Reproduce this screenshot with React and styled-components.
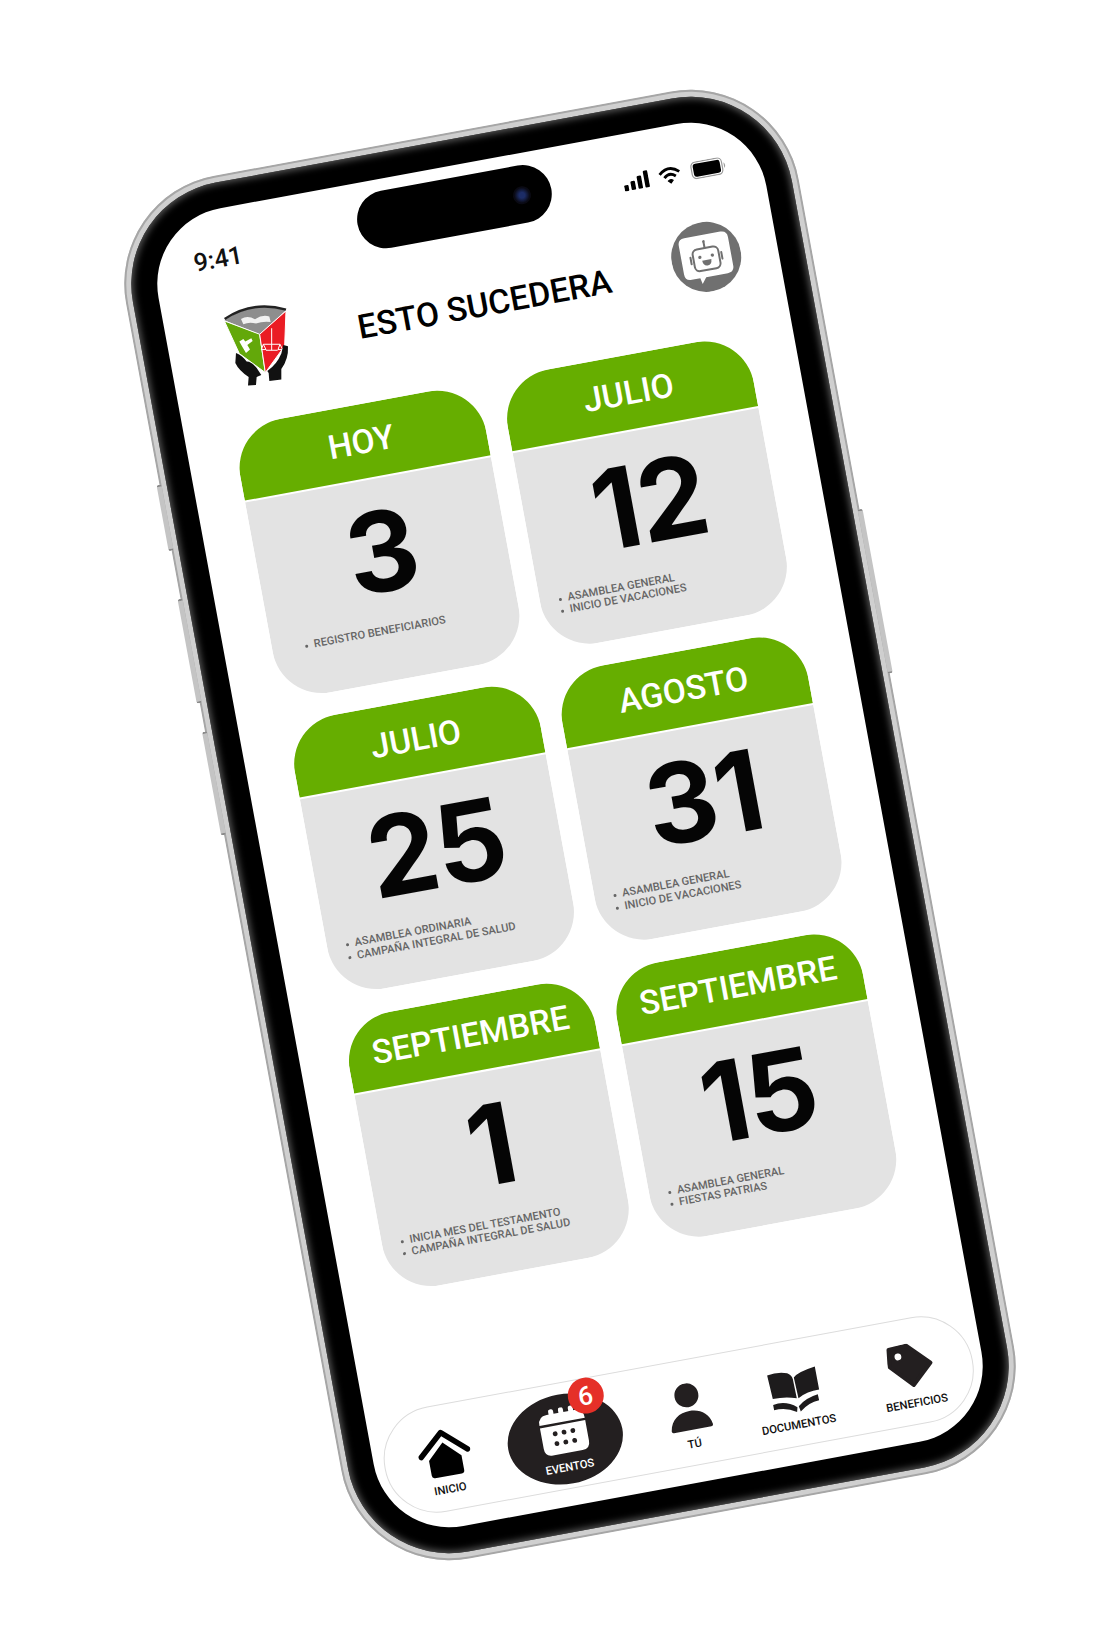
import React from 'react'
import styled, { createGlobalStyle } from 'styled-components'

const CARDS = [
  { head: 'HOY', day: '3', items: ['REGISTRO BENEFICIARIOS'] },
  { head: 'JULIO', day: '12', items: ['ASAMBLEA GENERAL', 'INICIO DE VACACIONES'] },
  { head: 'JULIO', day: '25', items: ['ASAMBLEA ORDINARIA', 'CAMPAÑA INTEGRAL DE SALUD'] },
  { head: 'AGOSTO', day: '31', items: ['ASAMBLEA GENERAL', 'INICIO DE VACACIONES'] },
  { head: 'SEPTIEMBRE', day: '1', items: ['INICIA MES DEL TESTAMENTO', 'CAMPAÑA INTEGRAL DE SALUD'] },
  { head: 'SEPTIEMBRE', day: '15', items: ['ASAMBLEA GENERAL', 'FIESTAS PATRIAS'] },
]

const HomeIcon = () => (
  <svg width="53" height="50" viewBox="0 0 53 50">
    <path d="M3 26 L26.5 5 L50 26" fill="none" stroke="#000" strokeWidth="5.5" strokeLinecap="round" strokeLinejoin="round" />
    <path d="M10 31 L26.5 15 L43 31 V46 Q43 49 40 49 H13 Q10 49 10 46 Z" fill="#000" />
  </svg>
)

const CalendarIcon = () => (
  <svg width="48" height="48" viewBox="0 0 48 48" fill="#fff">
    <rect x="12" y="1" width="5" height="9" rx="2" />
    <rect x="22" y="1" width="5" height="9" rx="2" />
    <rect x="32" y="1" width="5" height="9" rx="2" />
    <path d="M1 15 Q1 6 10 6 H38 Q47 6 47 15 V15.5 H1 Z" />
    <path d="M1 18 H47 V39 Q47 47 39 47 H9 Q1 47 1 39 Z" />
    <g fill="#231f20">
      <circle cx="15" cy="26" r="2.4" />
      <circle cx="24" cy="26" r="2.4" />
      <circle cx="33" cy="26" r="2.4" />
      <circle cx="15" cy="36" r="2.4" />
      <circle cx="24" cy="36" r="2.4" />
      <circle cx="33" cy="36" r="2.4" />
    </g>
  </svg>
)

const PersonIcon = () => (
  <svg width="44" height="48" viewBox="0 0 44 48" fill="#231f20">
    <ellipse cx="22" cy="12" rx="12" ry="12" />
    <path d="M1 45 C3 33 12 28 22 28 C32 28 41 33 43 45 Q43 47 41 47 H3 Q1 47 1 45 Z" />
  </svg>
)

/* points read off a 3x crop of the picture, turned back by the phone's angle */
const BookIcon = () => (
  <svg width="54" height="46" viewBox="41 66 162 138" fill="#1d1b1c" style={{ overflow: 'visible' }}>
    <g transform="rotate(10.45 122 135)">
      <path d="M45 98 Q75 86 105 91 Q118 96 122 108 L134 166 Q100 160 62 168 Z" />
      <path d="M125 104 Q135 88 188 71 L201 140 Q165 145 139 166 Z" />
      <path d="M63 186 Q100 172 136 193 L135 207 Q100 192 66 202 Z" />
      <path d="M140 190 Q160 165 197 154 L201 172 Q170 178 146 206 Z" />
    </g>
  </svg>
)

const TagIcon = () => (
  <svg width="46" height="45" viewBox="0 0 46 45">
    <path
      fill="#231f20"
      stroke="#231f20"
      strokeWidth="4"
      strokeLinejoin="round"
      d="M4 3 L22 2 L43 23 L22.5 42 L2 20 Z"
    />
    <circle cx="12" cy="11.6" r="3.4" fill="#fff" />
  </svg>
)

const BotIcon = () => (
  <svg width="70" height="70" viewBox="90 63 210 210">
    <circle cx="195" cy="168" r="105" fill="#707070" />
    <path d="M140 101 H250 Q270 101 270 121 V208 Q270 228 250 228 H184 L170 246 L166 228 H140 Q120 228 120 208 V121 Q120 101 140 101 Z" fill="#fff" />
    <g fill="none" stroke="#707070" strokeWidth="6" strokeLinecap="round">
      <rect x="156" y="141" width="78" height="66" rx="15" />
      <path d="M195 141 V124" />
      <path d="M148 162 V182 M242 162 V182" />
    </g>
    <circle cx="195" cy="121" r="4" fill="#707070" />
    <circle cx="176" cy="166" r="5" fill="#707070" />
    <circle cx="214" cy="166" r="5" fill="#707070" />
    <path d="M181 177 H209 Q208 194 195 194 Q182 194 181 177 Z" fill="#707070" />
  </svg>
)

/* crest, coordinates read straight off the picture so the group is turned back */
const Crest = () => (
  <CrestSvg width="90" height="100" viewBox="0 0 270 300">
    <g transform="rotate(10.45 150 150)">
      <path d="M55 88 Q140 28 240 58 L161 130 Z" fill="#8e8e8e" />
      <path d="M56 84 Q140 28 240 56" fill="none" stroke="#222" strokeWidth="7" />
      <path d="M105 84 Q125 72 147 85 Q170 70 190 77 L194 93 Q170 90 150 98 Q130 92 112 100 Z" fill="#f1f1f1" />
      <path d="M55 90 L161 130 L178 245 L100 188 Z" fill="#63a80a" stroke="#fff" strokeWidth="3" />
      <path d="M161 130 L240 60 L236 165 L178 245 Z" fill="#ea1c24" stroke="#fff" strokeWidth="3" />
      <path d="M100 152 L112 144 L118 152 L136 142 L140 150 L124 162 L132 176 L120 186 L108 166 Z" fill="#fff" />
      <path d="M172 160 H222 M197 112 V178 M180 178 H215 M172 160 L166 176 H180 Z M222 160 L216 176 H230 Z" stroke="#fff" strokeWidth="3" fill="none" />
      <path d="M90 186 Q110 194 122 212 Q140 212 158 240 L166 252 L152 258 L150 282 L126 284 L128 258 Q98 238 88 216 Z" fill="#111" />
      <path d="M232 162 L246 166 Q248 205 226 234 L226 266 L190 270 L188 246 L184 240 Q212 222 226 188 Z" fill="#111" />
    </g>
  </CrestSvg>
)

function Signal() {
  return (
    <svg width="26" height="20" viewBox="0 0 26 20" fill="#000">
      <rect x="0" y="12" width="4.5" height="6" rx="1" />
      <rect x="7" y="9" width="4.5" height="9" rx="1" />
      <rect x="14" y="5" width="4.5" height="13" rx="1" />
      <rect x="21" y="1" width="4.5" height="17" rx="1" />
    </svg>
  )
}

function Wifi() {
  return (
    <svg width="26" height="20" viewBox="0 0 24 20" fill="none" stroke="#000" strokeWidth="2.8">
      <path d="M2 8 Q12 -1 22 8" />
      <path d="M6.2 12 Q12 6.5 17.8 12" />
      <path d="M9.5 15.5 L12 18 L14.5 15.5 Q12 13.6 9.5 15.5 Z" fill="#000" strokeWidth="1" />
    </svg>
  )
}

function Battery() {
  return (
    <svg width="37" height="18" viewBox="0 0 36 18">
      <rect x="0.7" y="0.7" width="31" height="16.6" rx="4.5" fill="none" stroke="#999" strokeWidth="1.2" />
      <rect x="2.5" y="2.5" width="27.4" height="13" rx="2.8" fill="#000" />
      <path d="M33.5 6 Q36 9 33.5 12 Z" fill="#999" />
    </svg>
  )
}

const App = () => {
  return (
    <Stage>
      <GlobalStyle />
      <Phone>
        <SideButton $side="left" $top={294} $len={63} />
        <SideButton $side="left" $top={410} $len={102} />
        <SideButton $side="left" $top={545} $len={101} />
        <SideButton $side="right" $top={445} $len={163} />
        <Bezel>
          <Screen>
            <StatusBar>
              <Time>9:41</Time>
              <Island><Lens /></Island>
              <StatusIcons>
                <Signal />
                <Wifi />
                <Battery />
              </StatusIcons>
            </StatusBar>

            <Header>
              <Crest />
              <Title>ESTO SUCEDERA</Title>
              <BotIcon />
            </Header>

            <Cards>
              {CARDS.map((c, i) => (
                <Card key={i}>
                  <CardHead>{c.head}</CardHead>
                  <CardBody>
                    <Day>{c.day}</Day>
                    <Events $multi={c.items.length > 1}>
                      {c.items.map(t => <Event key={t}>{t}</Event>)}
                    </Events>
                  </CardBody>
                </Card>
              ))}
            </Cards>

            <Nav>
              <NavItem>
                <IconBox><HomeIcon /></IconBox>
                <NavLabel>INICIO</NavLabel>
              </NavItem>
              <NavItem $active>
                <IconBox><CalendarIcon /></IconBox>
                <NavLabel>EVENTOS</NavLabel>
                <Badge>6</Badge>
              </NavItem>
              <NavItem>
                <IconBox><PersonIcon /></IconBox>
                <NavLabel>TÚ</NavLabel>
              </NavItem>
              <NavItem>
                <IconBox><BookIcon /></IconBox>
                <NavLabel>DOCUMENTOS</NavLabel>
              </NavItem>
              <NavItem>
                <IconBox><TagIcon /></IconBox>
                <NavLabel>BENEFICIOS</NavLabel>
              </NavItem>
            </Nav>
          </Screen>
        </Bezel>
      </Phone>
    </Stage>
  )
}

const GlobalStyle = createGlobalStyle`
  body {
    margin: 0;
    background: #fff;
    font-family: Roboto, "Liberation Sans", sans-serif;
  }
`

const Stage = styled.div`
  width: 1110px;
  height: 1648px;
  box-sizing: border-box;
  padding: 1px 0 0 29px;
  display: flex;
  align-items: center;
  justify-content: center;
  overflow: hidden;
`

const Phone = styled.div`
  position: relative;
  flex: none;
  width: 684px;
  height: 1406px;
  box-sizing: border-box;
  padding: 7px;
  border-radius: 110px;
  background: #cfcfcf;
  box-shadow: inset 0 0 0 2px #a6a6a6;
  transform: rotate(-10.45deg);
`

const SideButton = styled.div`
  position: absolute;
  top: ${p => p.$top}px;
  height: ${p => p.$len}px;
  width: 5px;
  ${p => (p.$side === 'left' ? 'left: -3px;' : 'right: -3px;')}
  background: #c4c4c4;
  border-radius: 2px;
  border-top: 2px solid #8a8a8a;
  border-bottom: 2px solid #8a8a8a;
`

const Bezel = styled.div`
  position: relative;
  height: 100%;
  box-sizing: border-box;
  padding: 26px;
  background: #000;
  border-radius: 103px;
  box-shadow: inset 0 0 7px 2px #5a5a5a;
`

const Screen = styled.div`
  height: 100%;
  display: flex;
  flex-direction: column;
  background: #fff;
  border-radius: 77px;
  overflow: hidden;
`

const StatusBar = styled.div`
  flex: none;
  height: 95px;
  box-sizing: border-box;
  padding: 12px 0 0 41px;
  display: grid;
  grid-template-columns: 168px 197px 1fr;
  align-items: start;
`

const Time = styled.span`
  margin-top: 24px;
  font-size: 25px;
  line-height: 28px;
  font-weight: 500;
  color: #111;
`

const Island = styled.div`
  position: relative;
  height: 58px;
  background: #000;
  border-radius: 29px;
`

const Lens = styled.i`
  position: absolute;
  top: 21px;
  right: 21px;
  width: 18px;
  height: 18px;
  border-radius: 50%;
  background: radial-gradient(circle, #1c2c66 0 22%, #0a0a14 60%);
`

const StatusIcons = styled.div`
  margin-top: 27px;
  padding-left: 72px;
  display: flex;
  align-items: center;
  gap: 8px;
`

const CrestSvg = styled.svg`
  flex: none;
  margin-top: 2px;
`

const Header = styled.div`
  flex: none;
  height: 82px;
  box-sizing: border-box;
  padding: 0 37px 0 38px;
  display: flex;
  align-items: center;
`

const Title = styled.h1`
  flex: 1;
  margin: 14px 0 0;
  text-align: center;
  font-size: 33.5px;
  line-height: 40px;
  font-weight: 500;
  color: #000;
`

const Cards = styled.div`
  margin: 40.5px 0 0 48px;
  width: 522px;
  display: grid;
  grid-template-columns: 250px 250px;
  column-gap: 22px;
  row-gap: 23.5px;
`

const Card = styled.div`
  height: 278px;
  display: flex;
  flex-direction: column;
  gap: 2px;
  border-radius: 50px;
  overflow: hidden;
`

const CardHead = styled.div`
  flex: none;
  height: 74.5px;
  padding-top: 2px;
  box-sizing: border-box;
  display: flex;
  align-items: center;
  justify-content: center;
  background: #66ae00;
  color: #fff;
  font-size: 33.5px;
  font-weight: 500;
`

const CardBody = styled.div`
  flex: 1;
  padding-top: 17.5px;
  background: #e3e3e3;
`

const Day = styled.div`
  height: 110px;
  line-height: 110px;
  text-align: center;
  font-family: Inter, Roboto, sans-serif;
  font-size: 111px;
  font-weight: 700;
  letter-spacing: -2px;
  color: #050505;
`

const Events = styled.ul`
  height: 54px;
  box-sizing: border-box;
  margin: -2.5px 0 0;
  padding: ${p => (p.$multi ? '12px 0 0 28px' : '0 0 0 42px')};
  display: flex;
  flex-direction: column;
  justify-content: center;
  list-style: none;
`

const Event = styled.li`
  position: relative;
  font-size: 11.1px;
  line-height: 12.5px;
  font-weight: 500;
  color: #666;
  white-space: nowrap;
  &::before {
    content: '';
    position: absolute;
    left: -9px;
    top: 5px;
    width: 3px;
    height: 3px;
    border-radius: 50%;
    background: #666;
  }
`

const Nav = styled.nav`
  flex: none;
  height: 107px;
  box-sizing: border-box;
  margin: auto 10px 17px 10px;
  padding: 10.5px 0 0 17px;
  display: grid;
  grid-template-columns: 86px 157px 97px 115px 125px;
  align-items: start;
  justify-items: center;
  border: 1px solid #dcdcdc;
  border-radius: 53px;
`

const NavItem = styled.div`
  position: relative;
  width: ${p => (p.$active ? '116px' : 'auto')};
  height: 90px;
  box-sizing: border-box;
  padding-top: 11px;
  display: flex;
  flex-direction: column;
  align-items: center;
  gap: 6px;
  border-radius: 50%;
  background: ${p => (p.$active ? '#231f20' : 'transparent')};
  color: ${p => (p.$active ? '#fff' : '#111')};
`

const IconBox = styled.div`
  height: 50px;
  display: flex;
  align-items: center;
  justify-content: center;
`

const NavLabel = styled.span`
  font-size: 11.3px;
  line-height: 14px;
  font-weight: 500;
  white-space: nowrap;
`

const Badge = styled.span`
  position: absolute;
  top: -12px;
  left: 68px;
  width: 36px;
  height: 36px;
  display: flex;
  align-items: center;
  justify-content: center;
  border-radius: 50%;
  background: #e53028;
  color: #fff;
  font-size: 26px;
  font-weight: 500;
`

export default App
